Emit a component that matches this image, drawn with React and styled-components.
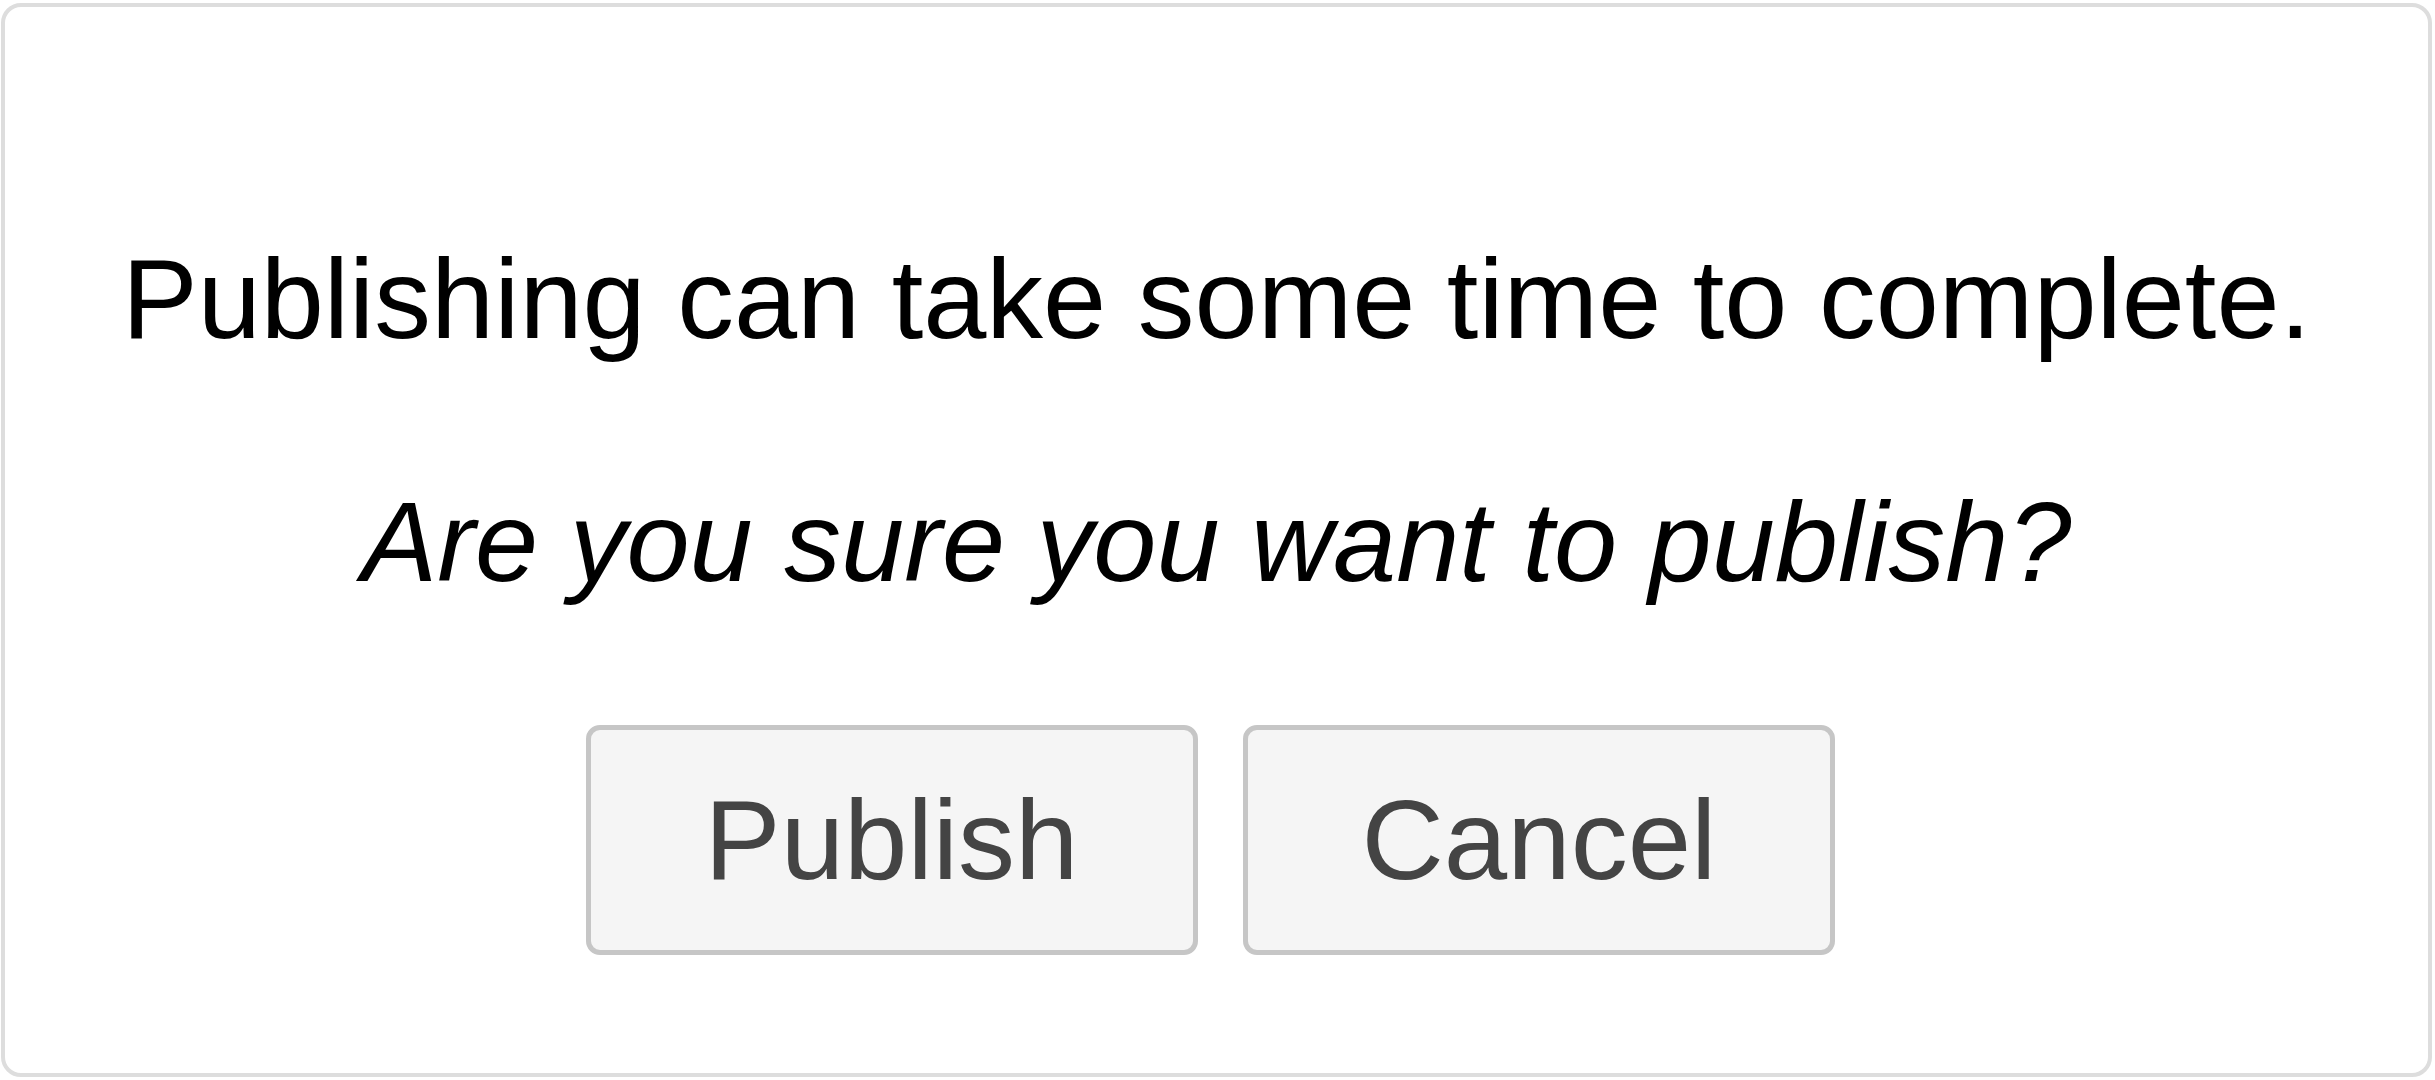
import React from "react";
import styled, { createGlobalStyle } from "styled-components";

const GlobalStyle = createGlobalStyle`
  html, body {
    margin: 0;
    padding: 0;
    background: #ffffff;
  }
  * {
    box-sizing: border-box;
  }
`;

const Page = styled.div`
  width: 100vw;
  height: 1080px;
  padding: 3px 3px 3px 1px;
  font-family: "Liberation Sans", Arial, sans-serif;
`;

const Card = styled.div`
  height: 100%;
  border: 4px solid #dddddd;
  border-radius: 20px;
  background: #ffffff;
  display: flex;
  flex-direction: column;
  align-items: center;
  padding-top: 226px;
`;

const Message = styled.p`
  margin: 0;
  font-size: 113.5px;
  line-height: 132px;
  color: #000000;
  font-style: ${(props) => (props.italic ? "italic" : "normal")};
  margin-bottom: ${(props) => props.gap || 0}px;
`;

const ButtonRow = styled.div`
  display: flex;
  flex-direction: row;
  gap: 45px;
  justify-content: center;
  padding-right: 12px;
`;

const DialogButton = styled.button`
  height: 230px;
  padding: 0 114px;
  border: 5px solid #c6c6c6;
  border-radius: 14px;
  background: #f5f5f5;
  color: #444444;
  font-family: "Liberation Sans", Arial, sans-serif;
  font-size: 114px;
  line-height: 1;
  cursor: pointer;
`;

function App() {
  return (
    <Page>
      <GlobalStyle />
      <Card>
        <Message gap={111}>Publishing can take some time to complete.</Message>
        <Message italic gap={117}>
          Are you sure you want to publish?
        </Message>
        <ButtonRow>
          <DialogButton>Publish</DialogButton>
          <DialogButton>Cancel</DialogButton>
        </ButtonRow>
      </Card>
    </Page>
  );
}

export default App;
